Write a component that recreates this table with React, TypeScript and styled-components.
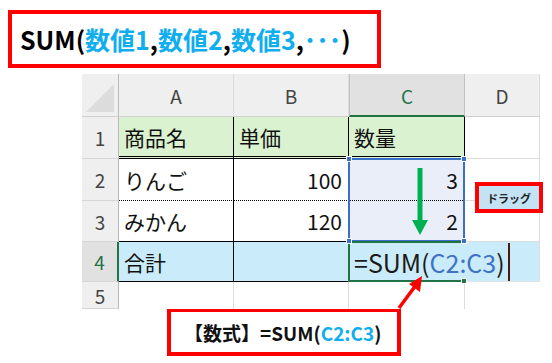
import React from 'react'
import styled, { createGlobalStyle } from 'styled-components'

const GlobalStyle = createGlobalStyle`
  html, body { margin: 0; padding: 0; background: #fff; }
  body { font-family: "Noto Sans CJK JP", "Noto Sans", sans-serif; }
`

const COLS = [37, 115, 115, 116, 75]
const ROWS = [43, 42, 42, 41, 40, 27]
const colX = (i: number) => COLS.slice(0, i).reduce((a, b) => a + b, 0)
const rowY = (i: number) => ROWS.slice(0, i).reduce((a, b) => a + b, 0)

const BLUE_TEXT = '#10aeee'
const RED = '#ff0000'
const XL_GREEN = '#217346'
const SEL_BLUE = '#3a70c8'

const Page = styled.div`
  position: relative;
  width: 552px;
  height: 363px;
  overflow: hidden;
  display: flex;
  flex-direction: column;
  align-items: flex-start;
`

const SyntaxBox = styled.div`
  box-sizing: border-box;
  margin: 10px 0 0 8px;
  width: 373px;
  height: 58px;
  border: 4px solid ${RED};
  display: flex;
  align-items: center;
  padding-left: 8px;
  font-size: 25px;
  font-weight: 700;
  color: #000;
  white-space: nowrap;
`

const Arg = styled.span`
  color: ${BLUE_TEXT};
`

const Sheet = styled.div`
  position: relative;
  margin: 6px 0 0 82px;
  display: grid;
  grid-template-columns: ${COLS.map((c) => c + 'px').join(' ')};
  grid-template-rows: ${ROWS.map((r) => r + 'px').join(' ')};
  font-family: "Noto Sans CJK JP", "Noto Sans", sans-serif;
`

const Corner = styled.div`
  position: relative;
  background: #efefef;
  border-right: 1px solid #b9b9b9;
  border-bottom: 1px solid #d0d0d0;
  box-sizing: border-box;
  &::after {
    content: '';
    position: absolute;
    right: 4px;
    bottom: 4px;
    width: 28px;
    height: 28px;
    background: #dcdcdc;
    clip-path: polygon(100% 0, 100% 100%, 0 100%);
  }
`

const ColHead = styled.div<{ $active?: boolean }>`
  box-sizing: border-box;
  display: flex;
  align-items: center;
  justify-content: center;
  background: ${(p) => (p.$active ? '#e1e1e1' : '#efefef')};
  color: ${(p) => (p.$active ? XL_GREEN : '#444')};
  border-right: 1px solid ${(p) => (p.$active ? '#c2c2c2' : '#dcdcdc')};
  border-left: ${(p) => (p.$active ? '1px solid #c2c2c2' : 'none')};
  border-bottom: ${(p) => (p.$active ? `2px solid ${XL_GREEN}` : '1px solid #d0d0d0')};
  font-size: 19px;
  padding-top: ${(p) => (p.$active ? '2px' : '0')};
`

const RowHead = styled.div<{ $active?: boolean }>`
  box-sizing: border-box;
  display: flex;
  align-items: center;
  justify-content: center;
  background: ${(p) => (p.$active ? '#e1e1e1' : '#efefef')};
  color: ${(p) => (p.$active ? XL_GREEN : '#444')};
  border-right: ${(p) => (p.$active ? `2px solid ${XL_GREEN}` : '1px solid #b9b9b9')};
  border-bottom: 1px solid #d6d6d6;
  font-size: 19px;
`

const Cell = styled.div<{
  $fill?: string
  $align?: 'left' | 'right'
  $right?: string
  $bottom?: string
}>`
  box-sizing: border-box;
  display: flex;
  align-items: center;
  justify-content: ${(p) => (p.$align === 'right' ? 'flex-end' : 'flex-start')};
  padding: 0 6px 0 5px;
  background: ${(p) => p.$fill ?? '#fff'};
  border-right: ${(p) => p.$right ?? '1px solid #dcdcdc'};
  border-bottom: ${(p) => p.$bottom ?? '1px solid #dcdcdc'};
  font-size: 21px;
  color: #111;
  white-space: nowrap;
`

const EditCell = styled(Cell)`
  position: relative;
  z-index: 2;
  overflow: visible;
  padding-left: 5px;
  font-size: 25px;
  color: #1a1a1a;
`

const Ref = styled.span`
  color: #3f72c6;
`

const Caret = styled.span`
  flex-shrink: 0;
  display: inline-block;
  width: 2px;
  height: 38px;
  margin-left: 3px;
  background: #4a1c10;
`

const SelectionFrame = styled.div`
  position: absolute;
  box-sizing: border-box;
  border: 2px solid ${SEL_BLUE};
  pointer-events: none;
  z-index: 3;
`

const ActiveFrame = styled.div`
  position: absolute;
  box-sizing: border-box;
  border: 2px solid ${XL_GREEN};
  border-right: none;
  pointer-events: none;
  z-index: 3;
`

const Handle = styled.div<{ $color: string }>`
  position: absolute;
  width: 6px;
  height: 6px;
  background: ${(p) => p.$color};
  border: 1px solid #fff;
  box-sizing: border-box;
  z-index: 4;
`

const DragLabel = styled.div`
  position: absolute;
  box-sizing: border-box;
  left: 475px;
  top: 182px;
  width: 68px;
  height: 31px;
  border: 4px solid ${RED};
  background: #c3e3f4;
  display: flex;
  align-items: center;
  justify-content: center;
  font-size: 11px;
  font-weight: 700;
  color: #222;
  z-index: 5;
`

const FormulaBox = styled.div`
  box-sizing: border-box;
  margin: -1px 0 0 167px;
  width: 234px;
  height: 48px;
  border: 4px solid ${RED};
  background: #fff;
  display: flex;
  align-items: center;
  padding-left: 13px;
  font-size: 19px;
  font-weight: 700;
  color: #111;
  white-space: nowrap;
`

const Overlay = styled.svg`
  position: absolute;
  left: 0;
  top: 0;
  pointer-events: none;
  z-index: 6;
`

const header = ['A', 'B', 'C', 'D']
const black = '1px solid #000'

export default function App() {
  const selLeft = colX(3) - 1
  const selTop = rowY(2) - 1
  const selW = COLS[3] + 1
  const selH = ROWS[2] + ROWS[3] + 1
  const actTop = rowY(4) - 1
  const actH = ROWS[4] + 1

  return (
    <Page>
      <GlobalStyle />
      <SyntaxBox>
        SUM(<Arg>数値1</Arg>,<Arg>数値2</Arg>,<Arg>数値3</Arg>,<Arg>･･･</Arg>)
      </SyntaxBox>

      <Sheet>
        <Corner />
        {header.map((h, i) => (
          <ColHead key={h} $active={i === 2}>
            {h}
          </ColHead>
        ))}

        <RowHead>1</RowHead>
        <Cell $fill="#daf2d0" $right={black} $bottom="3px double #000">商品名</Cell>
        <Cell $fill="#daf2d0" $right={black} $bottom="3px double #000">単価</Cell>
        <Cell $fill="#daf2d0" $right={black} $bottom="3px double #000">数量</Cell>
        <Cell />

        <RowHead>2</RowHead>
        <Cell $right={black} $bottom="1px dotted #000">りんご</Cell>
        <Cell $right={black} $bottom="1px dotted #000" $align="right">100</Cell>
        <Cell $fill="#e9eef8" $right={black} $bottom="1px dotted #000" $align="right">3</Cell>
        <Cell />

        <RowHead>3</RowHead>
        <Cell $right={black} $bottom={black}>みかん</Cell>
        <Cell $right={black} $bottom={black} $align="right">120</Cell>
        <Cell $fill="#e9eef8" $right={black} $bottom={black} $align="right">2</Cell>
        <Cell />

        <RowHead $active>4</RowHead>
        <Cell $fill="#caebf9" $right={black} $bottom={black}>合計</Cell>
        <Cell $fill="#caebf9" $right={black} $bottom={black} />
        <EditCell $fill="#caebf9" $right="none" $bottom={black}>
          =SUM(<Ref>C2:C3</Ref>)<Caret />
        </EditCell>
        <Cell $fill="#caebf9" $bottom="1px solid #e4e4e4" />

        <RowHead>5</RowHead>
        <Cell $bottom="none" />
        <Cell $bottom="none" />
        <Cell $bottom="none" />
        <Cell $bottom="none" $right="none" />

        <SelectionFrame style={{ left: selLeft, top: selTop, width: selW, height: selH }} />
        <ActiveFrame style={{ left: selLeft, top: actTop, width: selW, height: actH }} />
        <Handle $color={SEL_BLUE} style={{ left: selLeft - 2, top: selTop - 2 }} />
        <Handle $color={SEL_BLUE} style={{ left: selLeft + selW - 4, top: selTop - 2 }} />
        <Handle $color={SEL_BLUE} style={{ left: selLeft - 2, top: selTop + selH - 4 }} />
        <Handle $color={SEL_BLUE} style={{ left: selLeft + selW - 4, top: selTop + selH - 4 }} />
        <Handle $color={XL_GREEN} style={{ left: selLeft + selW - 4, top: actTop + actH - 4 }} />
      </Sheet>

      <FormulaBox>
        【数式】=SUM(<Arg>C2:C3</Arg>)
      </FormulaBox>

      <DragLabel>ドラッグ</DragLabel>

      <Overlay width={552} height={363} viewBox="0 0 552 363">
        <line x1={420} y1={168} x2={420} y2={222} stroke="#00b050" strokeWidth={5} />
        <polygon points="412,220 428,220 420,235" fill="#00b050" />
        <line x1={399} y1={308} x2={416} y2={285} stroke={RED} strokeWidth={3.5} />
        <polygon points="422,276 420,292 409,284" fill={RED} />
      </Overlay>
    </Page>
  )
}
